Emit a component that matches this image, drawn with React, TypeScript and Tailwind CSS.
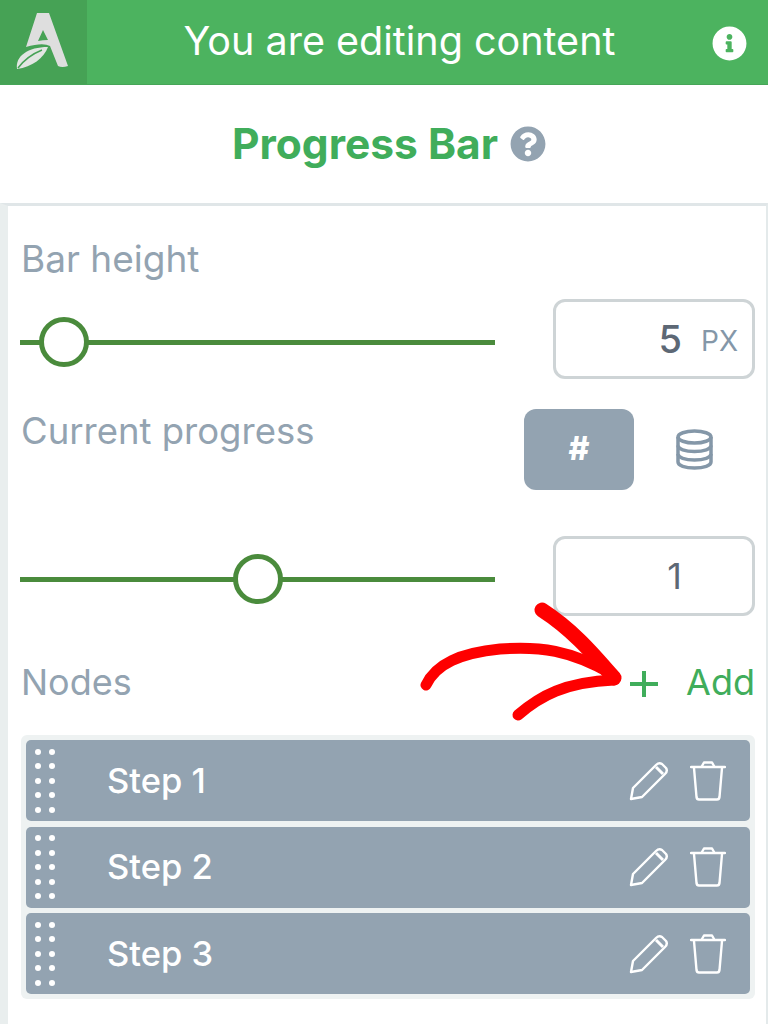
import React from "react";
import { FaInfoCircle, FaQuestionCircle } from "react-icons/fa";

const font = { fontFamily: "Inter, 'Liberation Sans', sans-serif" };

const Logo = () => (
  <svg width="87" height="84" viewBox="0 0 87 84">
    <path
      d="M37 13 H49 L68 66 Q62 68 58 66 L50 46 Q43 42 26 47 Z M43 30 L38 41 Q43 40 48 40 Z"
      fill="#dedede"
      fillRule="evenodd"
    />
    <path d="M17 69 C15 56 28 47 48 47 C44 58 32 67 17 69 Z" fill="#e2e6e2" />
    <path d="M18 68 C24 60 32 54 42 50" fill="none" stroke="#46a255" strokeWidth="1.5" />
  </svg>
);

const Slider = ({ at }: { at: number }) => (
  <div className="relative h-[52px] w-[475px] flex items-center">
    <div className="h-[5px] w-full bg-[#4a8b3c]" />
    <div
      className="absolute top-[1px] w-[50px] h-[50px] rounded-full bg-white border-[5px] border-[#4a8b3c]"
      style={{ left: at }}
    />
  </div>
);

const Grip = () => (
  <div className="grid grid-cols-2 gap-x-[8px] gap-y-[8.5px] w-[20px]">
    {Array.from({ length: 10 }).map((_, i) => (
      <span key={i} className="w-[6px] h-[6px] rounded-full bg-white" />
    ))}
  </div>
);

const Pencil = () => (
  <svg width="40" height="40" viewBox="0 0 40 40" fill="none" stroke="white" strokeWidth="2.4" strokeLinejoin="round">
    <path d="M2 38 L4 27 L27 4 Q30 1 33 3 L37 7 Q39 10 36 13 L13 36 Z" />
    <path d="M27 6 L34 13" strokeWidth="3" />
  </svg>
);

const Trash = () => (
  <svg width="36" height="40" viewBox="0 0 36 40" fill="none" stroke="white" strokeWidth="2.4" strokeLinejoin="round" strokeLinecap="round">
    <path d="M1 6 H35" />
    <path d="M12 5 L14 1.5 H22 L24 5" />
    <path d="M4 7 L6.5 36 Q6.8 38.5 9 38.5 H27 Q29.2 38.5 29.5 36 L32 7" />
  </svg>
);

const Node = ({ label }: { label: string }) => (
  <div className="h-[81px] rounded-[5px] bg-[#93a3b1] flex items-center pl-[9px] pr-[24px]">
    <Grip />
    <span className="ml-[52px] text-[34.5px] font-medium text-white flex-1">{label}</span>
    <div className="flex items-center gap-[21px]">
      <Pencil />
      <Trash />
    </div>
  </div>
);

const App = () => {
  return (
    <div className="relative w-[768px] h-[1024px] bg-white overflow-hidden" style={font}>
      {/* Top bar */}
      <div className="h-[85px] bg-[#4cb35f] flex items-center border-b border-[#46a558]">
        <div className="w-[87px] h-full bg-[#46a255] shrink-0">
          <Logo />
        </div>
        <div className="flex-1 text-center text-white text-[39.5px] leading-none pb-[1px]">
          You are editing content
        </div>
        <FaInfoCircle className="text-white mr-[21px] mt-[3px] shrink-0" size={35} />
      </div>

      {/* Title */}
      <div className="h-[118px] flex items-center justify-center gap-[12px] pl-[10px] pb-[1px]">
        <span className="text-[42.5px] font-bold text-[#40ad5b]">Progress Bar</span>
        <FaQuestionCircle className="text-[#93a3b1]" size={36} />
      </div>

      {/* Panel */}
      <div className="h-[821px] border-t-[3px] border-l-[8px] border-r-[2px] border-t-[#e0e6e8] border-l-[#e9eeee] border-r-[#e4eaeb] pl-[13px] pr-[11px]">
        <div className="text-[37px] leading-none text-[#93a3b1] pt-[34px]">Bar height</div>

        <div className="flex justify-between items-start mt-[22px]">
          <div className="mt-[17px] -ml-[1px]">
            <Slider at={19} />
          </div>
          <div className="w-[202px] h-[80px] rounded-[12px] border-[3px] border-[#ced4d6] flex items-center justify-end pr-[14px] gap-[19px]">
            <span className="text-[38px] font-medium text-[#5d6875]">5</span>
            <span className="text-[28px] text-[#8497a8] mt-[4px]">PX</span>
          </div>
        </div>

        <div className="flex justify-between items-start mt-[30px]">
          <div className="text-[36.5px] leading-none text-[#93a3b1] pt-[4px]">Current progress</div>
          <div className="flex items-center mr-[42px] gap-[42px]">
            <div className="w-[110px] h-[81px] rounded-[12px] bg-[#93a3b1] flex items-center justify-center text-white text-[32px] font-extrabold pb-[2px]">
              #
            </div>
            <svg width="37" height="41" viewBox="0 0 37 41" fill="none" stroke="#8497a8" strokeWidth="3.5">
              <ellipse cx="18.5" cy="8" rx="16.5" ry="6" />
              <path d="M2 8 V33 C2 36.5 9 39 18.5 39 C28 39 35 36.5 35 33 V8" />
              <path d="M2 16.5 C2 20 9 22.5 18.5 22.5 C28 22.5 35 20 35 16.5" />
              <path d="M2 25 C2 28.5 9 31 18.5 31 C28 31 35 28.5 35 25" />
            </svg>
          </div>
        </div>

        <div className="flex justify-between items-start mt-[46px]">
          <div className="mt-[17px] -ml-[1px]">
            <Slider at={213} />
          </div>
          <div className="w-[202px] h-[80px] rounded-[12px] border-[3px] border-[#ced4d6] flex items-center justify-end pr-[70px]">
            <span className="text-[36px] text-[#5d6875]">1</span>
          </div>
        </div>

        <div className="flex justify-between items-center mt-[47px]">
          <span className="text-[36px] leading-none text-[#93a3b1]">Nodes</span>
          <div className="flex items-center gap-[26px] text-[#40ad5b]">
            <svg className="mt-[5px]" width="32" height="32" viewBox="0 0 32 32" fill="none" stroke="#40ad5b" strokeWidth="4">
              <path d="M16 3 V29 M2 16 H30" />
            </svg>
            <span className="text-[36px] leading-none">Add</span>
          </div>
        </div>

        <div className="mt-[35px] rounded-[6px] bg-[#eef2f2] p-[5px] flex flex-col gap-[5.5px]">
          <Node label="Step 1" />
          <Node label="Step 2" />
          <Node label="Step 3" />
        </div>
      </div>

      {/* Hand-drawn arrow over the Add button */}
      <svg className="absolute left-0 top-0 pointer-events-none" width="768" height="1024" fill="none" stroke="#fe0000" strokeLinecap="round" strokeLinejoin="round">
        <path d="M426 685 C436 664 460 653 500 649 C540 646 570 650 612 674" strokeWidth="11" />
        <path d="M542 610 C570 628 590 650 614 678" strokeWidth="15" />
        <path d="M518 715 C540 696 565 682 614 680" strokeWidth="11" />
      </svg>
    </div>
  );
};

export default App;
